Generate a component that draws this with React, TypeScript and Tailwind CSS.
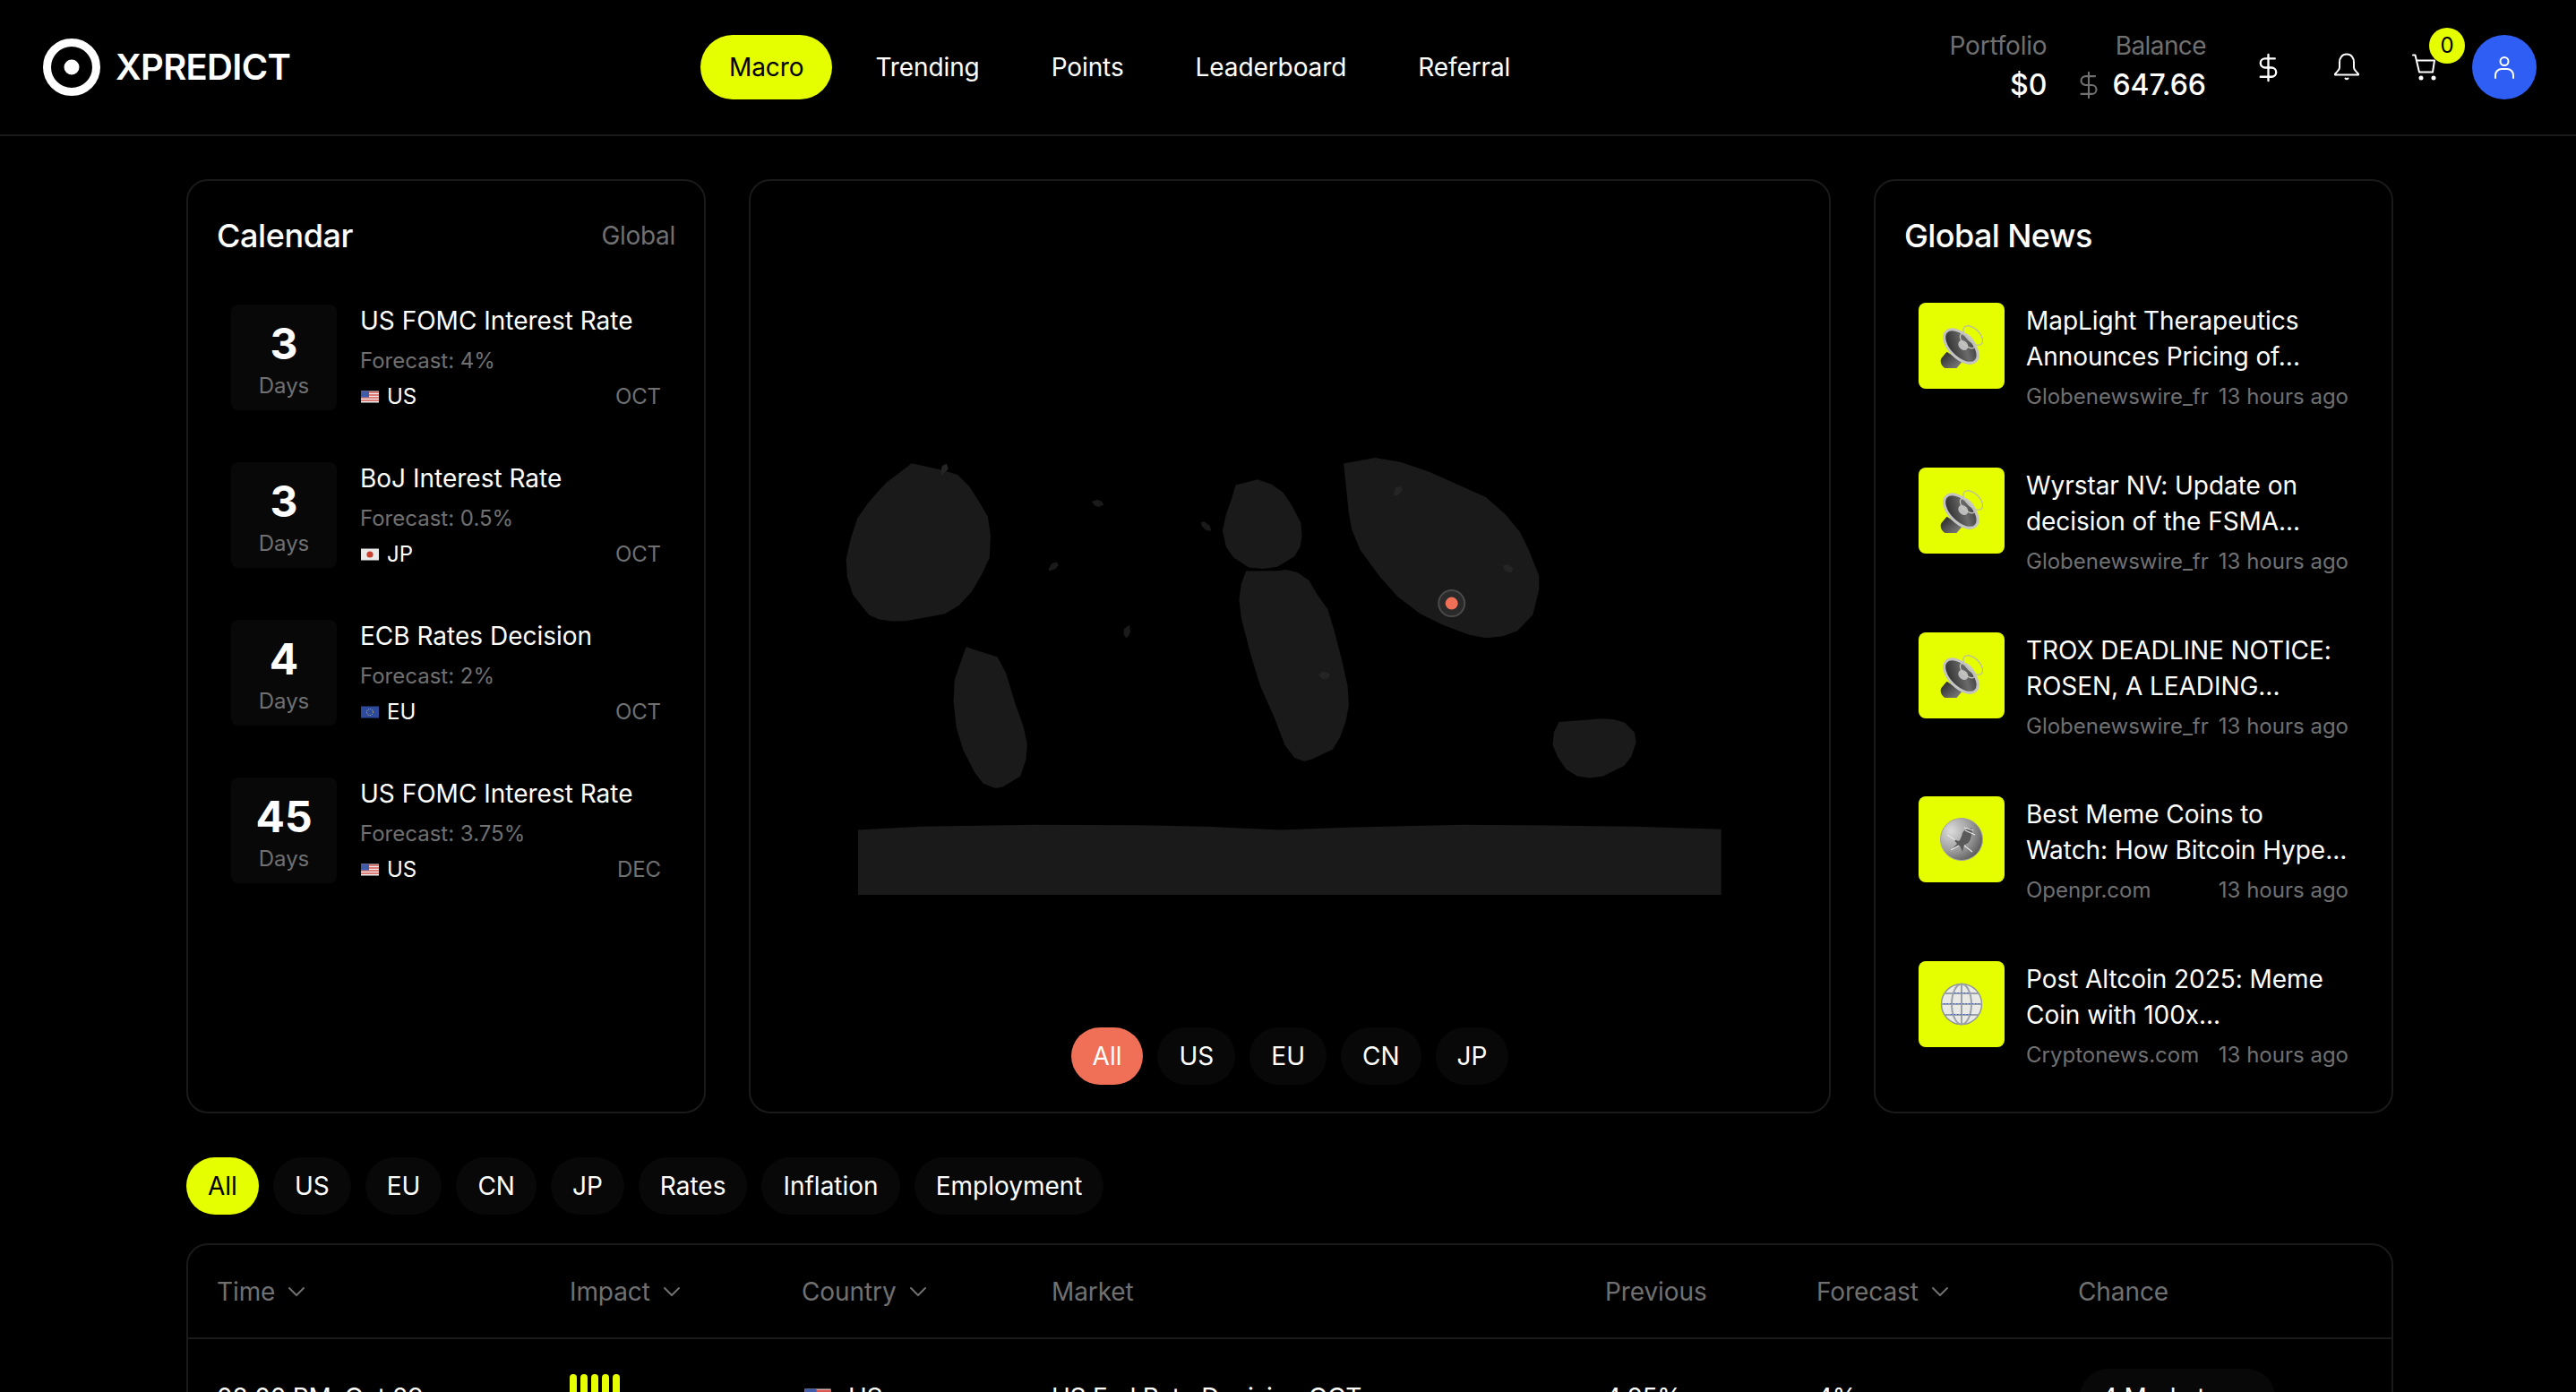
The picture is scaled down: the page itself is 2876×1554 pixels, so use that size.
import React from "react";
import { DollarSign } from "lucide-react";

const LIME = "bg-[#e6ff00]";

function FlagUS({ big }: { big?: boolean }) {
  return (
    <svg width={big ? 32 : 22} height={big ? 24 : 16} viewBox="0 0 22 16" className="shrink-0">
      <rect x="1" y="1.5" width="20" height="13" fill="#eee" />
      <path d="M1 3h20M1 6h20M1 9h20M1 12h20" stroke="#d8564f" strokeWidth="1.6" />
      <rect x="1" y="1.5" width="9" height="7" fill="#3f5ba9" />
    </svg>
  );
}
function FlagJP() {
  return (
    <svg width="22" height="16" viewBox="0 0 22 16" className="shrink-0">
      <rect x="1" y="1.5" width="20" height="13" fill="#e9e9e9" />
      <circle cx="11" cy="8" r="3.6" fill="#c8402f" />
    </svg>
  );
}
function FlagEU() {
  return (
    <svg width="22" height="16" viewBox="0 0 22 16" className="shrink-0">
      <rect x="1" y="1.5" width="20" height="13" fill="#2d4a9c" />
      <circle cx="11" cy="8" r="3.5" fill="none" stroke="#d8c64a" strokeWidth="1" strokeDasharray="1 1" />
    </svg>
  );
}
const flags: Record<string, React.ReactNode> = { US: <FlagUS />, JP: <FlagJP />, EU: <FlagEU /> };

function Speaker() {
  return (
    <svg width="50" height="50" viewBox="2 1 41 41">
      <defs>
        <linearGradient id="spk" x1="0" y1="0" x2="1" y2="1">
          <stop offset="0" stopColor="#1c1c1c" />
          <stop offset="0.6" stopColor="#6a6a6a" />
          <stop offset="1" stopColor="#2c2c2c" />
        </linearGradient>
        <linearGradient id="spkb" x1="0" y1="0" x2="1" y2="1">
          <stop offset="0" stopColor="#222" />
          <stop offset="1" stopColor="#8a8a8a" />
        </linearGradient>
      </defs>
      <path d="M9 27l-5 6c-2 4 1 9 6 10 4 1 6 0 8-1l5-6z" fill="url(#spkb)" />
      <ellipse cx="22" cy="22" rx="10.500" ry="19" transform="rotate(-45 22 22)" fill="url(#spk)" stroke="#c4c4c4" strokeWidth="2.500" />
      <ellipse cx="24" cy="21" rx="4" ry="5" transform="rotate(-45 24 21)" fill="#bdbdbd" />
      <ellipse cx="33" cy="12" rx="6" ry="11" transform="rotate(-45 33 12)" fill="none" stroke="#b9b9b0" strokeWidth="1" />
      <ellipse cx="28" cy="17" rx="4.500" ry="8.500" transform="rotate(-45 28 17)" fill="none" stroke="#c9c9c0" strokeWidth="1" />
    </svg>
  );
}
function Coin() {
  return (
    <svg width="48" height="48" viewBox="0 0 48 48">
      <defs>
        <radialGradient id="coin" cx="0.25" cy="0.3" r="0.9">
          <stop offset="0" stopColor="#dcdcdc" />
          <stop offset="0.55" stopColor="#9a9a9a" />
          <stop offset="1" stopColor="#4a4a4a" />
        </radialGradient>
      </defs>
      <circle cx="24" cy="24" r="23.500" fill="url(#coin)" stroke="#a4a4a4" />
      <path d="M36 12c-5-1-9 1-11 5-1 4-2 7-4 9l-6-2 4 5-5 5 8-3 3 7 2-8c6-1 8-6 9-18z" fill="#5a5a5a" />
      <path d="M27 11l10 3M28 14l11 5M8 19l9 6M12 36l9-5M27 31l9 7" stroke="#e6e6e6" strokeWidth="1.200" fill="none" />
    </svg>
  );
}
function Globe() {
  return (
    <svg width="48" height="48" viewBox="0 0 48 48">
      <circle cx="24" cy="24" r="22.500" fill="#e9eae6" stroke="#8f969c" strokeWidth="1.500" />
      <ellipse cx="24" cy="24" rx="11" ry="22.500" fill="none" stroke="#9aa1a8" strokeWidth="2" />
      <path d="M24 1.500v45" stroke="#9aa1a8" strokeWidth="2" />
      <path d="M5 12h38M1.500 24h45M5 36h38" stroke="#9aa1a8" strokeWidth="2" />
      <path d="M16 11.500h16M4 23.500h40M12 35.500h24" stroke="#3a5fd9" strokeWidth="1" strokeDasharray="1.500 2" />
    </svg>
  );
}
function Chevron() {
  return (
    <svg width="20" height="12" viewBox="0 0 20 12" fill="none" stroke="currentColor" strokeWidth="2" strokeLinecap="round" strokeLinejoin="round">
      <path d="M2 2l8 8 8-8" />
    </svg>
  );
}

const calendar = [
  { d: "3", title: "US FOMC Interest Rate", f: "4%", c: "US", m: "OCT" },
  { d: "3", title: "BoJ Interest Rate", f: "0.5%", c: "JP", m: "OCT" },
  { d: "4", title: "ECB Rates Decision", f: "2%", c: "EU", m: "OCT" },
  { d: "45", title: "US FOMC Interest Rate", f: "3.75%", c: "US", m: "DEC" },
];

const news = [
  { t: "MapLight Therapeutics Announces Pricing of...", s: "Globenewswire_fr", i: <Speaker /> },
  { t: "Wyrstar NV: Update on decision of the FSMA...", s: "Globenewswire_fr", i: <Speaker /> },
  { t: "TROX DEADLINE NOTICE: ROSEN, A LEADING...", s: "Globenewswire_fr", i: <Speaker /> },
  { t: "Best Meme Coins to Watch: How Bitcoin Hype...", s: "Openpr.com", i: <Coin /> },
  { t: "Post Altcoin 2025: Meme Coin with 100x...", s: "Cryptonews.com", i: <Globe /> },
];

const continents = [
  "185,104 238,125 265,140 285,175 303,225 318,270 323,330 321,400 308,450 290,505 268,548 243,575 175,597 150,598 128,592 110,578 82,515 72,460 70,405 78,340 90,275 110,225 140,165",
  "280,678 335,710 350,760 365,850 380,925 387,980 385,1030 375,1082 345,1115 332,1120 310,1105 295,1070 275,1000 263,930 258,850 260,780",
  "752,172 790,155 815,170 835,195 850,235 866,290 868,330 865,365 855,395 825,428 800,434 775,430 748,398 735,365 729,315 735,265 745,215",
  "770,441 825,440 840,437 860,445 880,470 895,515 913,560 925,630 938,720 948,800 950,860 945,910 935,960 922,998 885,1030 872,1036 855,1025 838,985 820,900 795,800 778,700 762,590 758,530 762,480",
  "941,105 996,87 1040,100 1090,130 1140,170 1190,210 1225,265 1250,320 1265,375 1283,455 1283,500 1272,578 1245,628 1220,645 1190,650 1160,640 1115,610 1075,575 1035,520 1005,460 970,375 955,310 950,260",
  "1318,913 1395,902 1415,905 1433,915 1450,945 1453,975 1445,1020 1432,1050 1395,1082 1372,1088 1350,1082 1330,1060 1315,1020 1307,985 1309,945",
  "91,1250 200,1240 400,1234 600,1236 700,1240 830,1250 960,1242 1150,1234 1300,1236 1450,1240 1602,1248 1602,1453 91,1453",
];
const islands = [
  "500,224 510,218 518,224 521,234 512,241 505,236",
  "691,288 697,286 707,300 709,314 702,315 693,302",
  "424,435 430,418 438,412 442,422 436,435 426,441",
  "556,622 566,610 568,632 561,652 556,640",
];
const spots = [
  "236,130 238,112 246,106 249,122 237,142",
  "896,765 905,755 917,762 915,775 905,779",
  "1028,205 1032,180 1042,176 1044,190 1035,206",
  "1219,425 1228,420 1238,432 1235,445 1225,443",
];

function WorldMap() {
  return (
    <svg width="1040" height="560" viewBox="0 0 1040 560" className="ml-[62px] mt-[278px] shrink-0">
      <g transform="scale(0.63776 0.35714)">
        {continents.map((p) => (
          <polygon key={p} points={p} fill="#1a1a1a" />
        ))}
        {islands.map((p) => (
          <polygon key={p} points={p} fill="#1a1a1a" />
        ))}
        {spots.map((p) => (
          <polygon key={p} points={p} fill="#252525" />
        ))}
      </g>
      <circle cx="720.700" cy="193.600" r="14.500" fill="#2a2a2a" stroke="#4a4a4a" strokeWidth="2" />
      <circle cx="720.700" cy="193.600" r="7" fill="#ef6f57" />
    </svg>
  );
}

function Pill({ label, active, coral }: { label: string; active?: boolean; coral?: boolean }) {
  const cls = active
    ? coral
      ? "bg-[#ef6f57] text-white"
      : `${LIME} text-black`
    : "bg-[#080808] text-white";
  return <button className={`h-[64px] px-6 rounded-full text-[28px] ${cls}`}>{label}</button>;
}

function Head({ label, sort, w }: { label: string; sort?: boolean; w: string }) {
  return (
    <div className={`flex items-center gap-[14px] text-[28px] tracking-[-0.1px] text-[#707070] ${w}`}>
      <span>{label}</span>
      {sort && <Chevron />}
    </div>
  );
}

export default function App() {
  return (
    <div className="h-screen overflow-hidden bg-black text-white font-['Inter','Liberation_Sans',sans-serif] antialiased">
      <header className="flex h-[152px] items-center border-b-2 border-[#1a1a1a] pl-[48px] pr-[44px]">
        <div className="flex w-[734px] items-center gap-[17px]">
          <svg width="64" height="64" viewBox="0 0 64 64">
            <circle cx="32" cy="32" r="27.500" fill="none" stroke="#fff" strokeWidth="9" />
            <circle cx="32" cy="32" r="8.500" fill="#fff" />
          </svg>
          <span className="text-[40px] font-semibold tracking-[-0.7px]">XPREDICT</span>
        </div>
        <nav className="flex items-center gap-4 text-[28px] tracking-[-0.1px]">
          <a className={`flex h-[72px] items-center rounded-full px-8 text-black ${LIME}`}>Macro</a>
          <a className="px-8">Trending</a>
          <a className="px-8">Points</a>
          <a className="px-8">Leaderboard</a>
          <a className="px-8">Referral</a>
        </nav>
        <div className="ml-auto flex items-center">
          <div className="flex flex-col items-end pb-[2px]">
            <span className="text-[28px] leading-[40px] tracking-[-0.2px] text-[#707070]">Portfolio</span>
            <span className="mt-[2px] text-[32px] font-medium leading-[44px]">$0</span>
          </div>
          <div className="ml-[30px] flex flex-col items-end pb-[2px]">
            <span className="text-[28px] leading-[40px] tracking-[-0.6px] text-[#707070]">Balance</span>
            <span className="mt-[2px] flex items-center gap-[9px] text-[32px] font-medium leading-[44px]">
              <DollarSign size={34} strokeWidth={1.5} className="text-[#707070]" />
              647.66
            </span>
          </div>
          <div className="ml-[33px] flex items-center gap-4">
            <div className="flex h-[72px] w-[72px] items-center justify-center">
              <DollarSign size={35} strokeWidth={1.6} />
            </div>
            <div className="flex h-[72px] w-[72px] items-center justify-center">
              <svg width="32" height="32" viewBox="0 0 32 32" fill="none" stroke="#fff" strokeWidth="2" strokeLinejoin="round" strokeLinecap="round">
                <path d="M16 1.500c-5.500 0-8 4.500-8 9v6c0 3-3 4.500-5 7v1h26v-1c-2-2.500-5-4-5-7v-6c0-4.500-2.500-9-8-9z" />
                <path d="M14.500 28.500q1.500 1.500 3 0" />
              </svg>
            </div>
            <div className="relative flex h-[72px] w-[72px] items-center justify-center">
              <svg width="32" height="32" viewBox="0 0 32 32" fill="none" stroke="#fff" strokeWidth="2" strokeLinejoin="round" strokeLinecap="round">
                <path d="M2 2.500h2.500l4.500 19h15l2-13H6" />
                <circle cx="11" cy="28" r="1.500" fill="#fff" />
                <circle cx="25" cy="28" r="1.500" fill="#fff" />
              </svg>
              <span className={`absolute left-[40px] top-[-8px] flex h-[40px] w-[40px] items-center justify-center rounded-full text-[24px] text-black ${LIME}`}>0</span>
            </div>
            <div className="flex h-[72px] w-[72px] items-center justify-center rounded-full bg-[#2f5ef5]">
              <svg width="32" height="32" viewBox="0 0 32 32" fill="none" stroke="#fff" strokeWidth="2" strokeLinecap="round">
                <circle cx="16" cy="9.500" r="4.500" />
                <path d="M6 28v-3a7 7 0 0 1 7-7h6a7 7 0 0 1 7 7v3" />
              </svg>
            </div>
          </div>
        </div>
      </header>

      <main className="pl-[208px] pr-[204px] pt-[48px]">
        <div className="grid h-[1043px] grid-cols-[580px_1208px_580px] gap-[48px]">
          <section className="rounded-[24px] border-2 border-[#1a1a1a] px-8 pt-8">
            <div className="flex h-[58px] items-center justify-between">
              <h2 className="text-[36px] font-medium tracking-[-0.4px]">Calendar</h2>
              <span className="text-[28px] tracking-[-0.3px] text-[#707070]">Global</span>
            </div>
            <div className="mt-[48px] flex flex-col gap-[58px] px-4">
              {calendar.map((e, i) => (
                <div key={i} className="flex h-[118px] gap-[26px]">
                  <div className="flex h-[118px] w-[118px] shrink-0 flex-col items-center rounded-[8px] bg-[#080808]">
                    <span className="mt-[17px] text-[48px] font-bold leading-[54px]">{e.d}</span>
                    <span className="mt-[4px] text-[24px] leading-[32px] text-[#707070]">Days</span>
                  </div>
                  <div className="flex min-w-0 flex-1 flex-col">
                    <div className="text-[28px] leading-[36px]">{e.title}</div>
                    <div className="mt-[11px] text-[24px] leading-[32px] text-[#707070]">Forecast: {e.f}</div>
                    <div className="mt-[8px] flex items-center justify-between text-[24px] leading-[32px]">
                      <span className="flex items-center gap-[8px]">
                        {flags[e.c]}
                        {e.c}
                      </span>
                      <span className="tracking-[-0.1px] text-[#707070]">{e.m}</span>
                    </div>
                  </div>
                </div>
              ))}
            </div>
          </section>

          <section className="flex flex-col rounded-[24px] border-2 border-[#1a1a1a]">
            <WorldMap />
            <div className="mb-[30px] mt-auto flex justify-center gap-4">
              {["All", "US", "EU", "CN", "JP"].map((l, i) => (
                <Pill key={l} label={l} active={i === 0} coral />
              ))}
            </div>
          </section>

          <section className="rounded-[24px] border-2 border-[#1a1a1a] px-8 pt-8">
            <div className="flex h-[58px] items-center">
              <h2 className="text-[36px] font-medium tracking-[-0.6px]">Global News</h2>
            </div>
            <div className="mt-[46px] flex flex-col gap-[62.750px] px-4">
              {news.map((n, i) => (
                <div key={i} className="flex gap-6">
                  <div className={`flex h-[96px] w-[96px] shrink-0 items-center justify-center rounded-[8px] ${LIME}`}>{n.i}</div>
                  <div className="flex min-w-0 flex-1 flex-col">
                    <div className="text-[28px] leading-[40px] tracking-[-0.05px]">{n.t}</div>
                    <div className="mt-[9px] flex justify-between text-[24px] leading-[32px] text-[#707070]">
                      <span>{n.s}</span>
                      <span>13 hours ago</span>
                    </div>
                  </div>
                </div>
              ))}
            </div>
          </section>
        </div>

        <div className="mt-[49px] flex gap-4">
          {["All", "US", "EU", "CN", "JP", "Rates", "Inflation", "Employment"].map((l, i) => (
            <Pill key={l} label={l} active={i === 0} />
          ))}
        </div>

        <div className="mt-[32px] rounded-t-[24px] border-2 border-[#1a1a1a]">
          <div className="flex h-[105px] items-center border-b-2 border-[#1a1a1a] px-8">
            <Head label="Time" sort w="w-[394px]" />
            <Head label="Impact" sort w="w-[259px]" />
            <Head label="Country" sort w="w-[279px]" />
            <Head label="Market" w="w-[618px]" />
            <Head label="Previous" w="w-[236px]" />
            <Head label="Forecast" sort w="w-[292px]" />
            <Head label="Chance" w="w-[200px]" />
          </div>
          <div className="flex items-center px-8 pt-[33px] text-[28px] tracking-[-0.25px]">
            <div className="w-[394px]">08:00 PM, Oct 29</div>
            <div className="flex w-[259px] gap-[4px]">
              {[0, 1, 2, 3, 4].map((b) => (
                <span key={b} className={`h-[52px] w-[8px] rounded-full ${LIME}`} />
              ))}
            </div>
            <div className="flex w-[279px] items-center gap-[18px] pl-[2px]">
              <FlagUS big />
              US
            </div>
            <div className="w-[618px]">US Fed Rate Decision OCT</div>
            <div className="w-[236px]">4.25%</div>
            <div className="w-[294px]">4%</div>
            <div className="flex h-[64px] w-[218px] items-center rounded-full bg-[#080808] px-6">4 Markets</div>
          </div>
        </div>
      </main>
    </div>
  );
}
